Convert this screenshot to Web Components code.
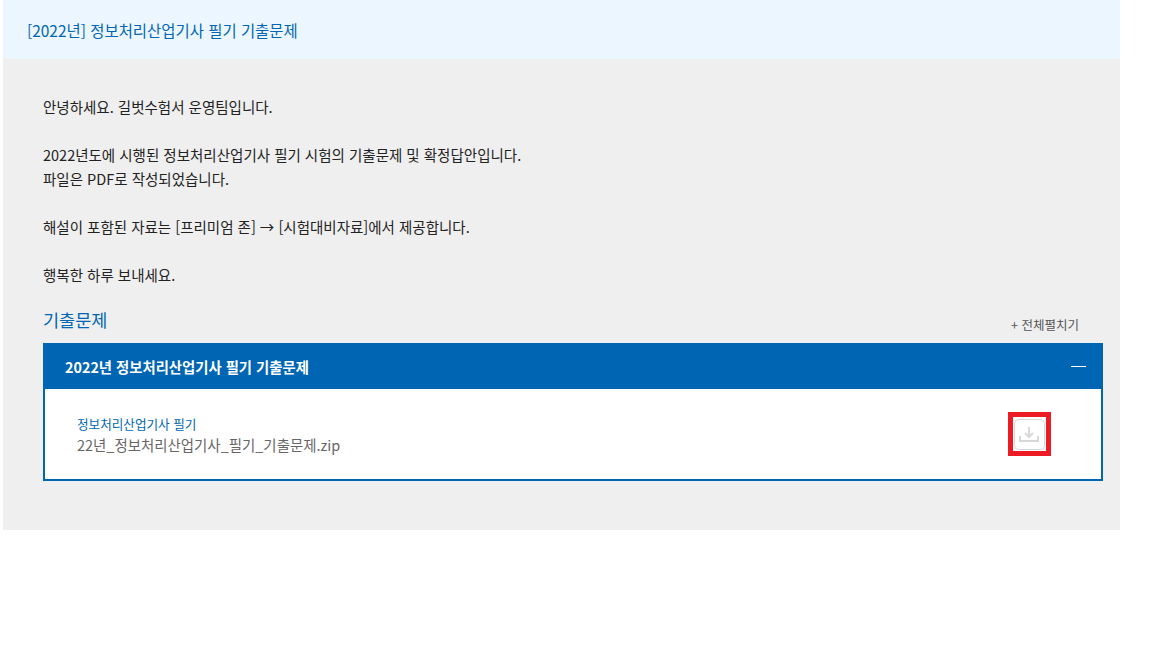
<!DOCTYPE html>
<html lang="ko">
<head>
<meta charset="utf-8">
<title>기출문제</title>
<style>
  html, body { margin: 0; background: #fff; }
  body { font-family: "Noto Sans CJK KR", "Noto Sans", sans-serif; padding-left: 3px; }
</style>
</head>
<body>
<exam-post heading="[2022년] 정보처리산업기사 필기 기출문제">
  <p>안녕하세요. 길벗수험서 운영팀입니다.</p>
  <p><br></p>
  <p>2022년도에 시행된 정보처리산업기사 필기 시험의 기출문제 및 확정답안입니다.</p>
  <p>파일은 PDF로 작성되었습니다.</p>
  <p><br></p>
  <p>해설이 포함된 자료는 [프리미엄 존] → [시험대비자료]에서 제공합니다.</p>
  <p><br></p>
  <p>행복한 하루 보내세요.</p>
  <file-section slot="files" title="기출문제">
    <file-accordion title="2022년 정보처리산업기사 필기 기출문제">
      <file-row category="정보처리산업기사 필기" name="22년_정보처리산업기사_필기_기출문제.zip"></file-row>
    </file-accordion>
  </file-section>
</exam-post>

<script>
class ExamPost extends HTMLElement {
  connectedCallback() {
    this.attachShadow({ mode: 'open' });
    this.shadowRoot.innerHTML = `
      <style>
        :host { display: block; width: 1117px; }
        .head { height: 59px; box-sizing: border-box; background: #ecf6ff; padding: 0 24px; display: flex; align-items: center; color: #0066b3; font-size: 15.45px; }
        .body { background: #efefef; height: 471px; box-sizing: border-box; padding: 36px 17px 0 40px; color: #222; font-size: 14.5px; line-height: 24px; }
        ::slotted(p) { margin: 0; height: 24px; }
      </style>
      <div class="head">${this.getAttribute('heading')}</div>
      <div class="body"><slot></slot><slot name="files"></slot></div>
    `;
  }
}

class FileSection extends HTMLElement {
  connectedCallback() {
    this.attachShadow({ mode: 'open' });
    this.shadowRoot.innerHTML = `
      <style>
        :host { display: block; margin-top: 15px; }
        .top { display: flex; justify-content: space-between; align-items: flex-end; height: 36px; padding-bottom: 5px; }
        h3 { margin: 0; font-size: 17.5px; font-weight: 400; line-height: 36px; color: #0066b3; }
        .all { font-size: 12.5px; color: #555; line-height: 24px; margin: 0 24px 1px 0; }
      </style>
      <div class="top"><h3>${this.getAttribute('title')}</h3><span class="all">+ 전체펼치기</span></div>
      <slot></slot>
    `;
  }
}

class FileAccordion extends HTMLElement {
  connectedCallback() {
    this.attachShadow({ mode: 'open' });
    this.shadowRoot.innerHTML = `
      <style>
        :host { display: block; border: 2px solid #0066b3; background: #fff; }
        .bar { height: 44px; background: #0066b3; color: #fff; display: flex; justify-content: space-between; align-items: center; padding: 0 15px 0 20px; font-size: 14.35px; font-weight: 700; }
        .minus { width: 15px; height: 1px; background: #fff; margin-top: -1px; }
      </style>
      <div class="bar"><span>${this.getAttribute('title')}</span><span class="minus"></span></div>
      <slot></slot>
    `;
  }
}

class FileRow extends HTMLElement {
  connectedCallback() {
    this.attachShadow({ mode: 'open' });
    this.shadowRoot.innerHTML = `
      <style>
        :host { display: flex; height: 90px; box-sizing: border-box; padding: 0 50px 0 32px; justify-content: space-between; align-items: center; }
        .text { padding-top: 3px; }
        .cat { font-size: 12.6px; line-height: 18px; color: #0066b3; }
        .name { font-size: 14.45px; line-height: 22px; color: #666; margin-top: 1px; }
        .btn { width: 43px; height: 44px; box-sizing: border-box; border: 5px solid #ed1c24; background: #fff; }
        svg { display: block; }
      </style>
      <div class="text"><div class="cat">${this.getAttribute('category')}</div><div class="name">${this.getAttribute('name')}</div></div>
      <div class="btn">
        <svg width="33" height="34" viewBox="0 0 33 34" fill="none" stroke="#d8d8d8">
          <rect x="1.500" y="2.500" width="30" height="30" rx="4" stroke-width="1"/>
          <path d="M16 10v10M12 16l4 4 4-4" stroke-width="2"/>
          <path d="M7 19v5h18v-5" stroke-width="2"/>
        </svg>
      </div>
    `;
  }
}

customElements.define('exam-post', ExamPost);
customElements.define('file-section', FileSection);
customElements.define('file-accordion', FileAccordion);
customElements.define('file-row', FileRow);
</script>
</body>
</html>
